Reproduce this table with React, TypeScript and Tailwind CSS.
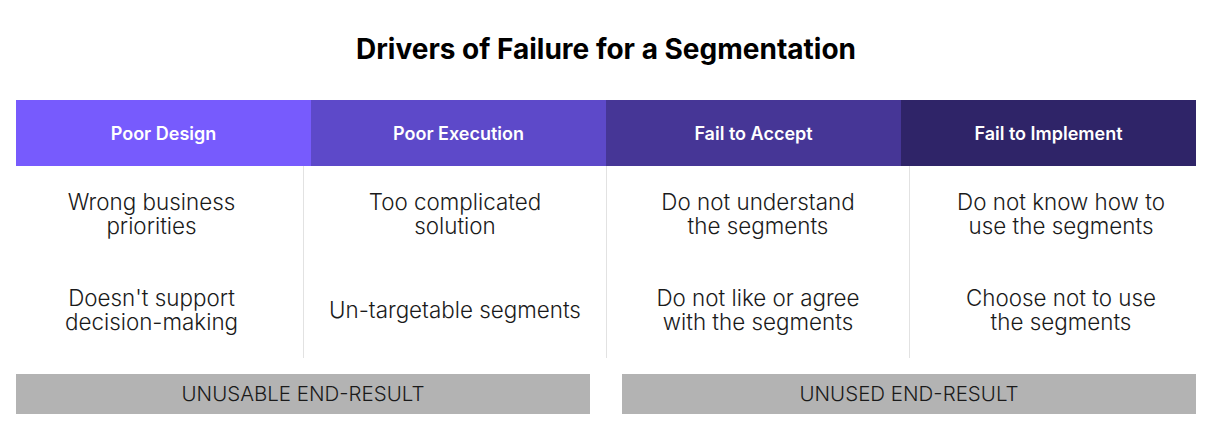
import React from "react";

const headers = [
  { label: "Poor Design", bg: "bg-[#775bfd]" },
  { label: "Poor Execution", bg: "bg-[#5d49c9]" },
  { label: "Fail to Accept", bg: "bg-[#463696]" },
  { label: "Fail to Implement", bg: "bg-[#2f2468]" },
];

const cols = [
  [["Wrong business", "priorities"], ["Doesn't support", "decision-making"]],
  [["Too complicated", "solution"], ["Un-targetable segments"]],
  [["Do not understand", "the segments"], ["Do not like or agree", "with the segments"]],
  [["Do not know how to", "use the segments"], ["Choose not to use", "the segments"]],
];

export default function App() {
  return (
    <div className="w-[1212px] h-[430px] bg-white font-['Inter',sans-serif] text-[#1a1a1a]">
      <div className="h-[100px] flex items-center justify-center pb-[2px]">
        <h1 className="text-[28px] font-bold text-black">
          Drivers of Failure for a Segmentation
        </h1>
      </div>
      <div className="px-4 grid grid-cols-4 h-[66px]">
        {headers.map((h) => (
          <div
            key={h.label}
            className={`${h.bg} flex items-center justify-center text-white text-[18px] font-semibold pt-[1px]`}
          >
            {h.label}
          </div>
        ))}
      </div>
      <div className="grid grid-cols-4 h-[191px]">
        {cols.map((c, i) => (
          <div
            key={i}
            className={`flex flex-col ${i > 0 ? "border-l border-[#e2e2e2]" : ""}`}
          >
            {c.map((lines, j) => (
              <div key={j} className="h-[96px] flex items-center justify-center">
                <p className="text-[22.4px] font-light leading-[24px] text-center">
                  {lines.map((l, k) => (
                    <React.Fragment key={l}>
                      {k > 0 && <br />}
                      {l}
                    </React.Fragment>
                  ))}
                </p>
              </div>
            ))}
          </div>
        ))}
      </div>
      <div className="px-4 mt-[17px] flex justify-between">
        <div className="w-[574px] h-[40px] bg-[#b3b3b3] flex items-center justify-center text-[20.5px] font-light">
          UNUSABLE END-RESULT
        </div>
        <div className="w-[574px] h-[40px] bg-[#b3b3b3] flex items-center justify-center text-[20.5px] font-light">
          UNUSED END-RESULT
        </div>
      </div>
    </div>
  );
}
